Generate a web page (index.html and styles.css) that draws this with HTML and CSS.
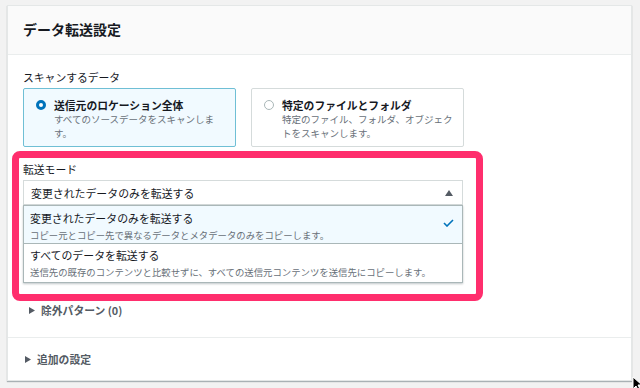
FILE: index.html
```html
<!DOCTYPE html>
<html lang="ja">
<head>
    <meta charset="UTF-8">
    <meta name="viewport" content="width=device-width, initial-scale=1.0">
    <title>データ転送設定</title>
    <link rel="stylesheet" href="styles.css">
</head>
<body>
    <div class="panel">
        <div class="panel-header">
            <h2>データ転送設定</h2>
        </div>
        <div class="panel-body">
            <div class="form-col">
                <div class="field-label">スキャンするデータ</div>
                <div class="tiles">
                    <div class="tile selected">
                        <span class="radio checked"></span>
                        <div class="tile-text">
                            <div class="tile-title">送信元のロケーション全体</div>
                            <div class="tile-desc">すべてのソースデータをスキャンします。</div>
                        </div>
                    </div>
                    <div class="tile">
                        <span class="radio"></span>
                        <div class="tile-text">
                            <div class="tile-title">特定のファイルとフォルダ</div>
                            <div class="tile-desc">特定のファイル、フォルダ、オブジェクトをスキャンします。</div>
                        </div>
                    </div>
                </div>

                <div class="highlight">
                    <div class="field-label">転送モード</div>
                    <div class="select">
                        <div class="select-trigger">
                            <span>変更されたデータのみを転送する</span>
                            <svg class="caret" width="8" height="6" viewBox="0 0 8 6"><path d="M0 6 L4 0 L8 6 Z" fill="#545b64"/></svg>
                        </div>
                        <ul class="options">
                            <li class="option selected">
                                <div class="option-text">
                                    <div class="option-title">変更されたデータのみを転送する</div>
                                    <div class="option-desc">コピー元とコピー先で異なるデータとメタデータのみをコピーします。</div>
                                </div>
                                <svg class="check" width="11" height="8" viewBox="0 0 11 8"><path d="M1 4 L4 7 L10 1" fill="none" stroke="#0073bb" stroke-width="1.6"/></svg>
                            </li>
                            <li class="option">
                                <div class="option-text">
                                    <div class="option-title">すべてのデータを転送する</div>
                                    <div class="option-desc">送信先の既存のコンテンツと比較せずに、すべての送信元コンテンツを送信先にコピーします。</div>
                                </div>
                            </li>
                        </ul>
                    </div>
                </div>

                <div class="expander indent">
                    <svg width="6" height="7" viewBox="0 0 6 7"><path d="M0 0 L6 3.5 L0 7 Z" fill="#545b64"/></svg>
                    <span>除外パターン (0)</span>
                </div>
            </div>
        </div>
        <div class="panel-footer">
            <div class="expander">
                <svg width="6" height="7" viewBox="0 0 6 7"><path d="M0 0 L6 3.5 L0 7 Z" fill="#545b64"/></svg>
                <span>追加の設定</span>
            </div>
        </div>
    </div>
    <svg class="pointer" width="10" height="14" viewBox="0 0 10 14"><path d="M1 1 L1 13 L4 10 L6 14 L8 13 L6 9 L10 9 Z" fill="#000" stroke="#fff" stroke-width="1"/></svg>
</body>
</html>
```

FILE: styles.css
```css
* {
    margin: 0;
    padding: 0;
    box-sizing: border-box;
}

body {
    font-family: "Noto Sans CJK JP", "Noto Sans", sans-serif;
    background: #f2f2f2;
    color: #16191f;
    padding: 5px 8px 0 7px;
    height: 388px;
    overflow: hidden;
}

.panel {
    background: #ffffff;
    border: 1px solid #e4e7e7;
    box-shadow: 0 1px 1px rgba(0, 28, 36, 0.3);
}

.panel-header {
    background: #fafafa;
    border-bottom: 1px solid #eaeded;
    padding: 13px 15px 15px;
}

.panel-header h2 {
    font-size: 14px;
    line-height: 20px;
    font-weight: 700;
}

.panel-body {
    padding: 15px 15px 20px;
}

.form-col {
    width: 441px;
}

.field-label {
    font-size: 10.8px;
    line-height: 14px;
    margin-bottom: 4px;
}

/* Radio tiles */
.tiles {
    display: grid;
    grid-template-columns: 1fr 1fr;
    gap: 15px;
}

.tile {
    display: flex;
    align-items: flex-start;
    gap: 8px;
    height: 59px;
    padding: 9px 4px 0 12px;
    border: 1px solid #d5dbdb;
    border-radius: 2px;
}

.tile.selected {
    background: #f1faff;
    border-color: #6fbfd5;
}

.radio {
    flex: none;
    width: 10px;
    height: 10px;
    margin-top: 2px;
    border-radius: 50%;
    border: 1px solid #aab7b8;
    background: #ffffff;
}

.radio.checked {
    border: 3px solid #0073bb;
}

.tile-title {
    font-size: 10.8px;
    line-height: 14px;
    font-weight: 700;
}

.tile-desc {
    font-size: 9.5px;
    line-height: 14px;
    color: #687078;
}

/* Highlighted transfer mode field */
.highlight {
    margin: 4px -19px 0 -11px;
    padding: 4px 13px 11px 4px;
    border: 7px solid #ff2e6d;
    border-radius: 8px;
}

.select-trigger {
    display: flex;
    justify-content: space-between;
    align-items: center;
    height: 25px;
    padding: 0 9px 0 7px;
    border: 1px solid #d5dbdb;
    font-size: 10.9px;
}

.options {
    list-style: none;
    border: 1px solid #aab7b8;
    border-top: none;
    box-shadow: 0 1px 2px rgba(0, 28, 36, 0.25);
}

.option {
    display: flex;
    justify-content: space-between;
    align-items: center;
    padding: 5px 8px 1px 6px;
    border-top: 1px solid #aab7b8;
}

.option.selected {
    background: #f1faff;
}

.option + .option {
    padding: 4px 8px 3px 6px;
}

.option-title {
    font-size: 10.9px;
    line-height: 14px;
    margin-bottom: 3px;
}

.option-desc {
    font-size: 9.4px;
    line-height: 14px;
    color: #687078;
}

.check {
    margin-bottom: 8px;
}

/* Expandable sections */
.expander {
    display: flex;
    align-items: center;
    gap: 6px;
    font-size: 10.8px;
    line-height: 14px;
    font-weight: 700;
    color: #545b64;
}

.expander.indent {
    margin-top: 2px;
    padding-left: 6px;
}

.panel-footer {
    border-top: 1px solid #eaeded;
    padding: 14px 15px 14px 17px;
}

.pointer {
    position: absolute;
    left: 632px;
    top: 376px;
}
```
